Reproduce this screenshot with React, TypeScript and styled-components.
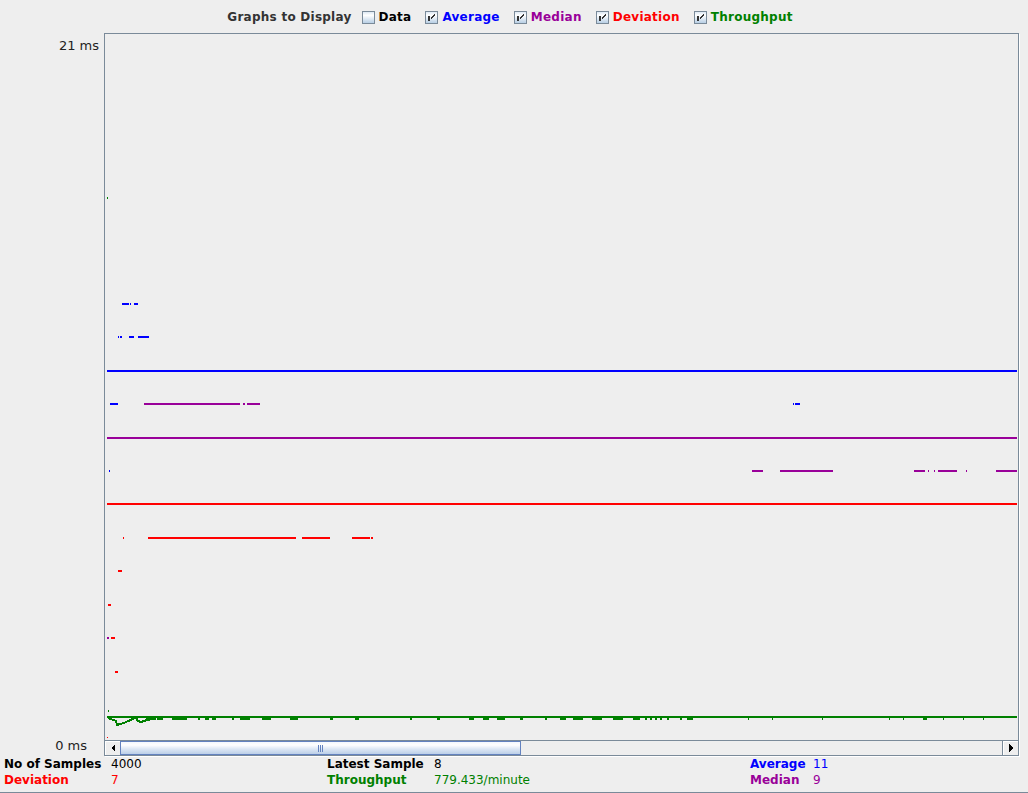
import React from "react";
import styled, { createGlobalStyle } from "styled-components";

const COLORS = {
  blue: "#0000ff",
  purple: "#990099",
  red: "#ff0000",
  green: "#008000",
  border: "#7a8a99",
  bg: "#eeeeee",
};

const GlobalStyle = createGlobalStyle`
  html, body { margin: 0; padding: 0; background: #eeeeee; }
  body {
    font-family: "DejaVu Sans", "Liberation Sans", sans-serif;
    font-size: 12px;
    color: #000;
  }
  * { box-sizing: border-box; }
`;

const Page = styled.div`
  width: 1028px;
  height: 793px;
  display: flex;
  flex-direction: column;
  background: ${COLORS.bg};
  overflow: hidden;
`;

const TopBar = styled.div`
  height: 33px;
  flex: none;
  display: flex;
  align-items: center;
  justify-content: center;
  padding: 1px 8px 0 0;
  font-weight: bold;
  font-size: 12px;
  letter-spacing: 0.25px;
`;

const Title = styled.span`
  color: #333333;
  margin-right: 10px;
`;

const CheckList = styled.div`
  display: flex;
  align-items: center;
  gap: 14px;
`;

const CheckItem = styled.label<{ $color: string }>`
  display: flex;
  align-items: center;
  gap: 4px;
  color: ${(p) => p.$color};
  white-space: nowrap;
`;

const Box = styled.span`
  width: 13px;
  height: 13px;
  flex: none;
  border: 1px solid ${COLORS.border};
  background: linear-gradient(#dde8f3 0%, #ffffff 30%, #b8cfe5 100%);
  position: relative;
  display: block;
`;

const CheckSvg = styled.svg`
  position: absolute;
  left: -1px;
  top: -1px;
  display: block;
`;

const Middle = styled.div`
  height: 723px;
  flex: none;
  display: flex;
`;

const Axis = styled.div`
  width: 104px;
  flex: none;
  display: flex;
  flex-direction: column;
  justify-content: space-between;
  padding: 5px 0 3px;
`;

const AxisLabel = styled.span<{ $right: number }>`
  align-self: flex-end;
  margin-right: ${(p) => p.$right}px;
  font-size: 13px;
  line-height: 15px;
  color: #222;
  white-space: nowrap;
`;

const Frame = styled.div`
  width: 915px;
  flex: none;
  border: 1px solid ${COLORS.border};
  box-shadow: 1px 1px 0 #ffffff;
  display: flex;
  flex-direction: column;
`;

const Viewport = styled.div`
  flex: 1;
  min-height: 0;
  overflow: hidden;
`;

const ChartSvg = styled.svg`
  display: block;
  width: 913px;
  height: 706px;
`;

const ScrollBar = styled.div`
  height: 15px;
  flex: none;
  border-top: 1px solid ${COLORS.border};
  display: flex;
  background: ${COLORS.bg};
`;

const ScrollButton = styled.div<{ $side: "left" | "right" }>`
  width: ${(p) => (p.$side === "left" ? 15 : 16)}px;
  flex: none;
  display: flex;
  align-items: center;
  justify-content: center;
  background: ${COLORS.bg};
  border-left: ${(p) => (p.$side === "right" ? `1px solid ${COLORS.border}` : "none")};
  box-shadow: inset 1px 1px 0 #ffffff;
`;

const Thumb = styled.div`
  width: 401px;
  flex: none;
  border: 1px solid #6382bf;
  background: linear-gradient(#f4f8fd 0%, #ffffff 25%, #dbe6f4 60%, #bccfe8 100%);
  display: flex;
  align-items: center;
  justify-content: center;
`;

const Track = styled.div`
  flex: 1;
`;

const Stats = styled.div`
  height: 37px;
  flex: none;
  border-bottom: 1px solid ${COLORS.border};
  display: grid;
  grid-template-columns: 107px 216px 107px 316px 63px 1fr;
  grid-auto-rows: 16px;
  align-content: start;
  padding: 0 0 0 4px;
  line-height: 16px;
  font-size: 12px;
`;

const StatLabel = styled.span<{ $color: string }>`
  font-weight: bold;
  color: ${(p) => p.$color};
  white-space: nowrap;
`;

const StatValue = styled.span<{ $color: string }>`
  color: ${(p) => p.$color};
  white-space: nowrap;
`;

type Seg = [number, number]; // x, width

const rows: { color: string; y: number; h?: number; segs: Seg[] }[] = [
  { color: COLORS.blue, y: 303, segs: [[122, 7], [130, 1], [134, 4]] },
  { color: COLORS.blue, y: 336, segs: [[118, 1], [120, 2], [129, 1], [130, 4], [138, 11]] },
  { color: COLORS.blue, y: 370, segs: [[107, 910]] },
  { color: COLORS.blue, y: 403, segs: [[110, 8], [793, 1], [795, 5]] },
  { color: COLORS.blue, y: 470, segs: [[109, 1]] },
  { color: COLORS.purple, y: 403, segs: [[144, 96], [243, 2], [247, 13]] },
  { color: COLORS.purple, y: 437, segs: [[107, 910]] },
  {
    color: COLORS.purple,
    y: 470,
    segs: [[752, 11], [780, 53], [914, 11], [928, 1], [934, 1], [938, 19], [966, 1], [996, 21]],
  },
  { color: COLORS.purple, y: 637, segs: [[107, 2]] },
  { color: COLORS.red, y: 503, segs: [[107, 910]] },
  { color: COLORS.red, y: 537, segs: [[123, 1], [148, 148], [302, 28], [352, 18], [371, 2]] },
  { color: COLORS.red, y: 570, segs: [[118, 4]] },
  { color: COLORS.red, y: 604, segs: [[108, 3]] },
  { color: COLORS.red, y: 637, segs: [[111, 4]] },
  { color: COLORS.red, y: 671, segs: [[115, 3]] },
  { color: COLORS.red, y: 737, h: 1, segs: [[107, 1]] },
  { color: COLORS.green, y: 197, segs: [[107, 1]] },
  { color: COLORS.green, y: 710, segs: [[108, 1]] },
  { color: COLORS.green, y: 716, segs: [[107, 910]] },
];

const greenTicks: Seg[] = [
  [146, 10], [157, 6], [172, 15], [198, 2], [205, 4], [212, 4], [232, 2], [240, 10],
  [262, 9], [290, 8], [330, 3], [355, 4], [410, 2], [437, 3], [469, 5], [483, 6],
  [497, 8], [520, 3], [545, 2], [560, 6], [573, 10], [592, 10], [613, 10], [633, 7],
  [645, 2], [650, 2], [655, 2], [660, 2], [667, 2], [680, 2], [687, 6], [748, 1],
  [772, 1], [822, 1], [889, 1], [903, 1], [923, 4], [943, 1], [963, 1], [983, 1],
];

const greenCurve =
  "108,717 110,719 114,720 116,721 117,725 120,724 124,723 128,721 131,720 134,718 136,718 138,721 141,722 144,721 147,720 152,719";

function Check() {
  return (
    <CheckSvg width="13" height="13" viewBox="0 0 13 13" shapeRendering="crispEdges">
      <rect x="3" y="5" width="2" height="5" fill="#333" />
      <path d="M9.5 3.5 L5.5 7.5 M9.5 4.5 L5.5 8.5" stroke="#333" strokeWidth="1" fill="none" />
    </CheckSvg>
  );
}

function CheckBox({ label, color, checked }: { label: string; color: string; checked: boolean }) {
  return (
    <CheckItem $color={color}>
      <Box>{checked && <Check />}</Box>
      {label}
    </CheckItem>
  );
}

function Arrow({ dir }: { dir: "left" | "right" }) {
  return (
    <svg width="4" height="8" viewBox="0 0 4 8" shapeRendering="crispEdges">
      {dir === "left" ? (
        <polygon points="4,0 4,8 0,4" fill="#000" />
      ) : (
        <polygon points="0,0 0,8 4,4" fill="#000" />
      )}
    </svg>
  );
}

function Grip() {
  return (
    <svg width="5" height="7" viewBox="0 0 5 7" shapeRendering="crispEdges">
      <rect x="0" y="0" width="1" height="7" fill="#6382bf" />
      <rect x="2" y="0" width="1" height="7" fill="#6382bf" />
      <rect x="4" y="0" width="1" height="7" fill="#6382bf" />
    </svg>
  );
}

function Chart() {
  return (
    <ChartSvg viewBox="105 34 913 706" shapeRendering="crispEdges">
      {rows.map((r, i) =>
        r.segs.map(([x, w], j) => (
          <rect key={`${i}-${j}`} x={x} y={r.y} width={w} height={r.h ?? 2} fill={r.color} />
        ))
      )}
      {greenTicks.map(([x, w], i) => (
        <rect key={`g${i}`} x={x} y={718} width={w} height={2} fill={COLORS.green} />
      ))}
      <polyline points={greenCurve} fill="none" stroke={COLORS.green} strokeWidth="2" />
    </ChartSvg>
  );
}

export default function App() {
  return (
    <Page>
      <GlobalStyle />
      <TopBar>
        <Title>Graphs to Display</Title>
        <CheckList>
          <CheckBox label="Data" color="#000000" checked={false} />
          <CheckBox label="Average" color={COLORS.blue} checked />
          <CheckBox label="Median" color={COLORS.purple} checked />
          <CheckBox label="Deviation" color={COLORS.red} checked />
          <CheckBox label="Throughput" color={COLORS.green} checked />
        </CheckList>
      </TopBar>
      <Middle>
        <Axis>
          <AxisLabel $right={5}>21 ms</AxisLabel>
          <AxisLabel $right={17}>0 ms</AxisLabel>
        </Axis>
        <Frame>
          <Viewport>
            <Chart />
          </Viewport>
          <ScrollBar>
            <ScrollButton $side="left">
              <Arrow dir="left" />
            </ScrollButton>
            <Thumb>
              <Grip />
            </Thumb>
            <Track />
            <ScrollButton $side="right">
              <Arrow dir="right" />
            </ScrollButton>
          </ScrollBar>
        </Frame>
      </Middle>
      <Stats>
        <StatLabel $color="#000">No of Samples</StatLabel>
        <StatValue $color="#000">4000</StatValue>
        <StatLabel $color="#000">Latest Sample</StatLabel>
        <StatValue $color="#000">8</StatValue>
        <StatLabel $color={COLORS.blue}>Average</StatLabel>
        <StatValue $color={COLORS.blue}>11</StatValue>
        <StatLabel $color={COLORS.red}>Deviation</StatLabel>
        <StatValue $color={COLORS.red}>7</StatValue>
        <StatLabel $color={COLORS.green}>Throughput</StatLabel>
        <StatValue $color={COLORS.green}>779.433/minute</StatValue>
        <StatLabel $color={COLORS.purple}>Median</StatLabel>
        <StatValue $color={COLORS.purple}>9</StatValue>
      </Stats>
    </Page>
  );
}
